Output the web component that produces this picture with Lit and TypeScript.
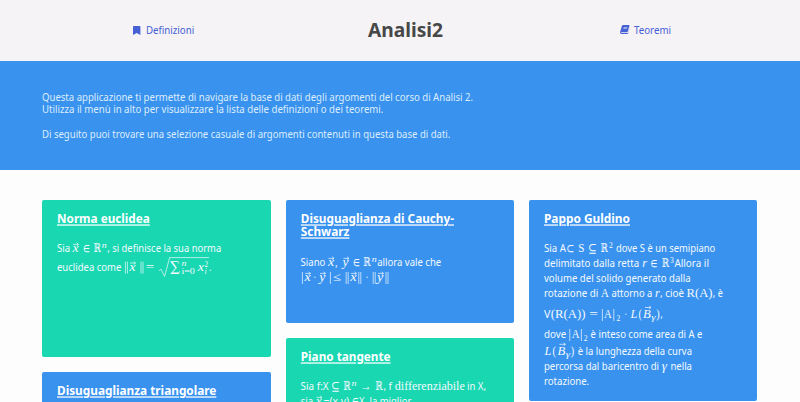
import { LitElement, html, svg, css } from "lit";
import { customElement, property } from "lit/decorators.js";

type Kind = "s" | "b" | "m" | "op" | "i" | "k" | "ki" | "bar" | "norm" | "vec" | "root";
/** kind, text, start, width, offset from the baseline */
type Item = [Kind, string, number, number, number?];
interface Row { h: number; base: number; items: Item[]; }
interface Topic { tone: "info" | "primary"; height: number; left: number; title: Row[]; body: Row[]; }

const titleRow = (text: string, x: number, w: number, h = 14): Row => ({ h, base: 10.4, items: [["b", text, x, w]] });

const columns: Topic[][] = [
  [
    {
      tone: "primary", height: 157.5, left: 57,
      title: [titleRow("Norma euclidea", 57, 92.8)],
      body: [
        { h: 15, base: 10, items: [
          ["s", "Sia", 57, 13], ["i", "x", 72.4, 6.2], ["vec", "", 73, 5.5, -7.6], ["m", "∈", 83, 6.8], ["m", "ℝ", 93.2, 8.4],
          ["ki", "n", 101.8, 5, -4], ["s", ", si definisce la sua norma", 107.2, 114]] },
        { h: 20, base: 13.6, items: [
          ["s", "euclidea come", 57, 64.4], ["norm", "", 125.4, 2], ["i", "x", 129.2, 6.4], ["vec", "", 130, 5.5, -7.6],
          ["norm", "", 141, 2], ["m", "=", 145.8, 8.4], ["root", "", 159, 50], ["op", "∑", 169.6, 11, 0.8],
          ["ki", "n", 181.4, 5, -4.6], ["k", "i=0", 181.4, 13.4, 3.2], ["i", "x", 197.8, 6.2],
          ["k", "2", 204.6, 3.6, -4], ["ki", "i", 204.6, 2.2, 3.2], ["s", ".", 209, 2.4]] },
      ],
    },
    { tone: "info", height: 120, left: 57, title: [titleRow("Disuguaglianza triangolare", 57, 159.4)], body: [] },
  ],
  [
    {
      tone: "info", height: 123, left: 301,
      title: [titleRow("Disuguaglianza di Cauchy-", 300.8, 153.2, 13.6), titleRow("Schwarz", 300.8, 48.6)],
      body: [
        { h: 15, base: 10, items: [
          ["s", "Siano", 300.6, 24.8], ["i", "x", 328, 6.2], ["vec", "", 328.5, 5.5, -7.6], ["m", ",", 335, 2.4],
          ["i", "y", 342.6, 6], ["vec", "", 343.5, 5.5, -7.6], ["m", "∈", 353, 6.8], ["m", "ℝ", 363, 8.4],
          ["ki", "n", 371.8, 5, -4], ["s", "allora vale che", 377.2, 64]] },
        { h: 15, base: 10, items: [
          ["bar", "", 302.4, 1], ["i", "x", 304.4, 6.2], ["vec", "", 305, 5.5, -7.6], ["m", "·", 313.4, 2.6],
          ["i", "y", 319.2, 6.2], ["vec", "", 320, 5.5, -7.6], ["bar", "", 330.4, 1], ["m", "≤", 333, 8],
          ["norm", "", 346.2, 2], ["i", "x", 350.2, 6.4], ["vec", "", 351, 5.5, -7.6], ["norm", "", 358.8, 2],
          ["m", "·", 365.8, 2.6], ["norm", "", 373.2, 2], ["i", "y", 377, 6.4], ["vec", "", 378, 5.5, -7.6], ["norm", "", 386, 2]] },
      ],
    },
    {
      tone: "primary", height: 120, left: 301,
      title: [titleRow("Piano tangente", 300.8, 89.8)],
      body: [
        { h: 15, base: 10, items: [
          ["s", "Sia f:X", 300.6, 28], ["m", "⊆", 331.2, 8.2], ["m", "ℝ", 343, 8.4], ["ki", "n", 351.6, 5, -4],
          ["m", "→", 360.4, 11], ["m", "ℝ", 375, 8.4], ["s", ", f", 383.4, 8.6],
          ["m", "differenziabile", 394.8, 70], ["s", "in X,", 467, 19]] },
        { h: 15, base: 10, items: [
          ["s", "sia", 300.6, 12.4], ["i", "x", 315.8, 6.2], ["vec", "", 316.5, 5.5, -7.6], ["s", "=(x,y)", 323.6, 25.6],
          ["m", "∈", 352, 6.6], ["s", "X, la miglior", 359, 52.4]] },
      ],
    },
  ],
  [
    {
      tone: "info", height: 201.5, left: 544,
      title: [titleRow("Pappo Guldino", 544, 86)],
      body: [
        { h: 15, base: 10, items: [
          ["s", "Sia A", 544, 22], ["m", "⊂", 566.6, 7.6], ["m", "S", 578.2, 6.2], ["m", "⊆", 588.2, 8.2],
          ["m", "ℝ", 600.2, 8.4], ["k", "2", 609, 3.8, -4], ["s", "dove S è un semipiano", 616, 99.2]] },
        { h: 15, base: 10, items: [
          ["s", "delimitato dalla retta", 544, 95.2], ["i", "r", 642.2, 4.8], ["m", "∈", 650.6, 6.8],
          ["m", "ℝ", 661.4, 8.4], ["k", "3", 670, 3.8, -4], ["s", "Allora il", 674.4, 34.6]] },
        { h: 15, base: 10, items: [["s", "volume del solido generato dalla", 544, 146.6]] },
        { h: 18, base: 10, items: [
          ["s", "rotazione di", 544, 54.4], ["m", "A", 601, 7.8], ["s", "attorno a", 611.4, 41],
          ["i", "r", 655, 4.8], ["s", ", cioè", 660, 24], ["m", "R(A)", 686.6, 26], ["s", ", è", 712.8, 10]] },
        { h: 21, base: 13, items: [
          ["s", "V", 544, 6.4], ["m", "(R(A))", 550.8, 34.8], ["m", "=", 589.2, 8.6], ["bar", "", 602.4, 1],
          ["m", "A", 604, 7.8], ["bar", "", 613.8, 1], ["k", "2", 616.4, 3.8, 3], ["m", "·", 624.6, 2.6],
          ["i", "L", 630.4, 6.8], ["m", "(", 638.4, 3.4], ["i", "B", 643, 7.8], ["vec", "", 645, 6, -10.5],
          ["ki", "γ", 651.2, 4.4, 2], ["m", ")", 656.2, 3.4], ["s", ",", 660.6, 2.2]] },
        { h: 16, base: 12, items: [
          ["s", "dove", 544, 22.2], ["bar", "", 569.8, 1], ["m", "A", 571.8, 7.8], ["bar", "", 581.4, 1],
          ["k", "2", 583.8, 3.8, 3], ["s", "è inteso come area di A e", 590.6, 111.8]] },
        { h: 18, base: 12.8, items: [
          ["i", "L", 544.4, 6.8], ["m", "(", 552.6, 3.4], ["i", "B", 557.4, 7.8], ["vec", "", 559.4, 6, -10.5],
          ["ki", "γ", 565.8, 4.4, 2], ["m", ")", 570.8, 3.4], ["s", "è la lunghezza della curva", 577.8, 114.2]] },
        { h: 15, base: 10, items: [
          ["s", "percorsa dal baricentro di", 544, 115], ["i", "γ", 661.8, 5.2], ["s", "nella", 670.4, 21.6]] },
        { h: 15, base: 10, items: [["s", "rotazione.", 544, 45.2]] },
      ],
    },
  ],
];

@customElement("text-row")
class TextRow extends LitElement {
  @property({ attribute: false }) row!: Row;
  @property({ type: Number }) left = 0;

  static styles = css`
    :host { display: block; }
    svg { display: block; overflow: visible; fill: currentColor; }
    text { white-space: pre; }
    .s { font: 10.3px "Noto Sans", sans-serif; }
    .b { font: 700 12.7px "Noto Sans", sans-serif; text-decoration: underline; text-decoration-thickness: 1px; text-underline-offset: 1px; text-decoration-skip-ink: none; }
    .m, .i { font-family: "Liberation Serif", "DejaVu Math TeX Gyre", "DejaVu Serif", serif; font-size: 12px; }
    .op { font-family: "DejaVu Math TeX Gyre", "DejaVu Serif", serif; font-size: 12px; }
    .k, .ki { font-family: "Liberation Serif", "DejaVu Serif", serif; font-size: 8.4px; }
    .i, .ki { font-style: italic; }
    .rule { fill: none; stroke: currentColor; stroke-width: 0.7; }
  `;

  private item([kind, text, x, w, dy = 0]: Item) {
    switch (kind) {
      case "bar":
        return svg`<path class="rule" d="M${x} -9V3"/>`;
      case "norm":
        return svg`<path class="rule" d="M${x} -9V3M${x + w} -9V3"/>`;
      case "vec":
        return svg`<path class="rule" d="M${x} ${dy}h${w}m-1.8 -1.5l1.8 1.5l-1.8 1.5"/>`;
      case "root":
        return svg`<path class="rule" d="M${x} 0l2 -1.4l3.6 7.2l5 -18.8h${w - 10.6}"/>`;
      default:
        return svg`<text class=${kind} x=${x} y=${dy} textLength=${w} lengthAdjust="spacingAndGlyphs">${text}</text>`;
    }
  }

  render() {
    const { h, base, items } = this.row;
    return html`<svg width="210" height=${h} viewBox="${this.left} ${-base} 210 ${h}">${items.map((i) => this.item(i))}</svg>`;
  }
}

@customElement("topic-card")
class TopicCard extends LitElement {
  @property({ attribute: false }) topic!: Topic;

  static styles = css`
    :host { display: block; }
    .card { box-sizing: border-box; padding: 13px 0 0 15px; border-radius: 2px; color: #fff; overflow: hidden; }
    .info { background: #3992ee; }
    .primary { background: #18d7b1; }
    .body { margin-top: 15.6px; color: #f4faff; }
  `;

  render() {
    const { tone, height, left, title, body } = this.topic;
    const row = (r: Row) => html`<text-row .row=${r} .left=${left}></text-row>`;
    return html`<article class="card ${tone}" style="height:${height}px">
      <div>${title.map(row)}</div>
      <div class="body">${body.map(row)}</div>
    </article>`;
  }
}

@customElement("app-root")
class AppRoot extends LitElement {
  static styles = css`
    :host { display: block; height: 402px; overflow: hidden; background: #fefdfe; font-family: "Noto Sans", sans-serif; }
    nav { height: 61px; box-sizing: border-box; background: #f5f3f6; display: grid; grid-template-columns: 285px 241px 274px; align-items: center; padding-bottom: 1px; }
    .link { display: flex; align-items: center; color: #4660d5; }
    .defs { padding-left: 133px; gap: 6px; }
    .theorems { padding-left: 93.6px; gap: 5px; }
    .brand { padding-left: 83px; color: #474747; }
    svg { display: block; overflow: visible; fill: currentColor; }
    .nav-text { font: 10.3px "Noto Sans", sans-serif; }
    .brand-text { font: 700 19.5px "Noto Sans", sans-serif; }
    .hero { height: 109px; box-sizing: border-box; padding: 30px 42px 0; background: #3992ee; color: #dcedfd; }
    .hero-text { font: 10.3px "Noto Sans", sans-serif; }
    main { display: grid; grid-template-columns: repeat(3, 228.4px); gap: 15px; padding: 29.7px 42.3px 0; align-items: start; }
    .column { display: grid; gap: 15px; }
  `;

  private fitted(text: string, width: number, height: number, base: number, cls: string) {
    return html`<svg width=${width} height=${height}><text class=${cls} y=${base} textLength=${width} lengthAdjust="spacingAndGlyphs">${text}</text></svg>`;
  }

  render() {
    return html`
      <nav>
        <a class="link defs">
          <svg width="7.4" height="9" viewBox="0 0 384 512" preserveAspectRatio="none"><path d="M0 512V48C0 21 21 0 48 0h288c27 0 48 21 48 48v464L192 400z"/></svg>
          ${this.fitted("Definizioni", 48.2, 12, 9.7, "nav-text")}
        </a>
        <div class="brand">${this.fitted("Analisi2", 75, 24, 19, "brand-text")}</div>
        <a class="link theorems">
          <svg width="9.6" height="9.1" viewBox="0 0 18 17"><path fill-rule="evenodd" d="M6 0H16.6Q18.2 .3 17.7 2L14.5 12.3Q14.1 13.4 13 13.4H3.3Q1.9 13.5 2 14.4Q2.1 15.2 3.3 15.2H14Q15 15.2 15.4 14.2L18 5.5L17.8 7L15.6 15.2Q15 17 13.4 17H3Q-.3 16.6 .2 13.2L3.5 2Q4.2 .2 6 0zM7 3.6L6.6 4.8H13.7L14.1 3.6zM6.2 6.5L5.8 7.7H12.8L13.2 6.5z"/></svg>
          ${this.fitted("Teoremi", 37, 12, 9.7, "nav-text")}
        </a>
      </nav>
      <section class="hero">
        ${this.fitted("Questa applicazione ti permette di navigare la base di dati degli argomenti del corso di Analisi 2.", 431, 12.3, 9.7, "hero-text")}
        ${this.fitted("Utilizza il menù in alto per visualizzare la lista delle definizioni o dei teoremi.", 341.4, 24.7, 9.7, "hero-text")}
        ${this.fitted("Di seguito puoi trovare una selezione casuale di argomenti contenuti in questa base di dati.", 408.4, 12.3, 9.7, "hero-text")}
      </section>
      <main>
        ${columns.map((topics) => html`<div class="column">${topics.map((t) => html`<topic-card .topic=${t}></topic-card>`)}</div>`)}
      </main>
    `;
  }
}
